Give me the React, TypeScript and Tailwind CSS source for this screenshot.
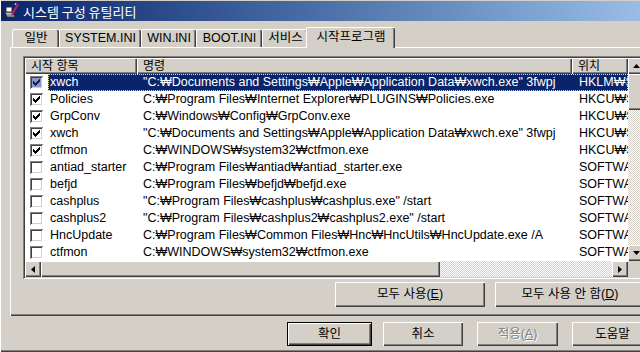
import React from 'react';

const RAISED =
  'shadow-[inset_1px_1px_#ffffff,inset_-1px_-1px_#404040,inset_-2px_-2px_#808080]';
const SUNKEN =
  'shadow-[inset_1px_1px_#808080,inset_-1px_-1px_#ffffff,inset_2px_2px_#404040,inset_-2px_-2px_#d4d0c8]';
const CHECKER =
  'bg-[repeating-conic-gradient(#ffffff_0_25%,#d4d0c8_0_50%)] bg-[length:2px_2px]';

type Row = { name: string; cmd: string; loc: string; checked: boolean; selected?: boolean };

const rows: Row[] = [
  { name: 'xwch', cmd: '"C:₩Documents and Settings₩Apple₩Application Data₩xwch.exe" 3fwpj', loc: 'HKLM₩SOFTWARE', checked: true, selected: true },
  { name: 'Policies', cmd: 'C:₩Program Files₩Internet Explorer₩PLUGINS₩Policies.exe', loc: 'HKCU₩SOFTWARE', checked: true },
  { name: 'GrpConv', cmd: 'C:₩Windows₩Config₩GrpConv.exe', loc: 'HKCU₩SOFTWARE', checked: true },
  { name: 'xwch', cmd: '"C:₩Documents and Settings₩Apple₩Application Data₩xwch.exe" 3fwpj', loc: 'HKCU₩SOFTWARE', checked: true },
  { name: 'ctfmon', cmd: 'C:₩WINDOWS₩system32₩ctfmon.exe', loc: 'HKCU₩SOFTWARE', checked: true },
  { name: 'antiad_starter', cmd: 'C:₩Program Files₩antiad₩antiad_starter.exe', loc: 'SOFTWARE', checked: false },
  { name: 'befjd', cmd: 'C:₩Program Files₩befjd₩befjd.exe', loc: 'SOFTWARE', checked: false },
  { name: 'cashplus', cmd: '"C:₩Program Files₩cashplus₩cashplus.exe" /start', loc: 'SOFTWARE', checked: false },
  { name: 'cashplus2', cmd: '"C:₩Program Files₩cashplus2₩cashplus2.exe" /start', loc: 'SOFTWARE', checked: false },
  { name: 'HncUpdate', cmd: 'C:₩Program Files₩Common Files₩Hnc₩HncUtils₩HncUpdate.exe /A', loc: 'SOFTWARE', checked: false },
  { name: 'ctfmon', cmd: 'C:₩WINDOWS₩system32₩ctfmon.exe', loc: 'SOFTWARE', checked: false },
];

function Check({ checked, selected }: { checked: boolean; selected?: boolean }) {
  return (
    <div
      className={`w-[13px] h-[13px] shrink-0 flex items-center justify-center ${SUNKEN} ${
        selected ? 'bg-[#8d96bd]' : 'bg-white'
      }`}
    >
      {checked && (
        <svg width="7" height="7" viewBox="0 0 7 7" shapeRendering="crispEdges">
          <path
            d="M6 0h1v3h-1v1h-1v1h-1v1h-1v1h-1v-1h-1v-1h-1v-3h1v1h1v1h1v-1h1v-1h1z"
            fill={selected ? '#0a246a' : '#000000'}
          />
        </svg>
      )}
    </div>
  );
}

function Arrow({ dir }: { dir: 'up' | 'down' | 'left' | 'right' }) {
  const pts: Record<string, string> = {
    up: '3.5,0 7,4 0,4',
    down: '0,0 7,0 3.5,4',
    left: '4,0 4,7 0,3.5',
    right: '0,0 4,3.5 0,7',
  };
  const horiz = dir === 'up' || dir === 'down';
  return (
    <div className={`w-[16px] h-[16px] shrink-0 bg-[#d4d0c8] flex items-center justify-center ${RAISED}`}>
      <svg width={horiz ? 7 : 4} height={horiz ? 4 : 7} viewBox={horiz ? '0 0 7 4' : '0 0 4 7'}>
        <polygon points={pts[dir]} fill="#000000" />
      </svg>
    </div>
  );
}

function TitleIcon() {
  return (
    <svg width="16" height="16" viewBox="0 0 16 16" className="shrink-0">
      <polygon points="1,9 8,9 11,14 3,14" fill="#c8c8c8" stroke="#303030" strokeWidth="1" />
      <rect x="2" y="4" width="6" height="5" fill="#ffffff" stroke="#303030" strokeWidth="1" />
      <line x1="3" y1="12" x2="9" y2="12" stroke="#606060" strokeWidth="1" />
      <line x1="8" y1="12" x2="14" y2="1" stroke="#c02060" strokeWidth="2" />
      <line x1="11" y1="2" x2="12" y2="0" stroke="#f0f0f0" strokeWidth="1" />
    </svg>
  );
}

type TabDef = { label: string; w: string; selected?: boolean };
const tabs: TabDef[] = [
  { label: '일반', w: 'w-[47px]' },
  { label: 'SYSTEM.INI', w: 'w-[82px]' },
  { label: 'WIN.INI', w: 'w-[55px]' },
  { label: 'BOOT.INI', w: 'w-[66px]' },
  { label: '서비스', w: 'w-[46px]' },
  { label: '시작프로그램', w: 'w-[89px]', selected: true },
];

export default function App() {
  return (
    <div className="w-[640px] h-[352px] overflow-hidden bg-[#d4d0c8] text-[12px] leading-none text-black font-['Liberation_Sans','Noto_Sans_CJK_KR',sans-serif]">
      <div className="w-[690px] h-[352px] flex flex-col pt-[1px] border-l border-white shadow-[inset_0_-1px_#404040,inset_0_-2px_#808080]">
        {/* Title bar */}
        <div className="h-[20px] flex items-center gap-[3px] pl-[3px] bg-linear-to-r from-[#0a246a] to-[#a6caf0] text-white text-[13px]">
          <TitleIcon />
          <span className="font-['Noto_Sans_CJK_KR',sans-serif]">시스템 구성 유틸리티</span>
        </div>

        {/* Body */}
        <div className="flex flex-col pl-[9px] pt-[6px]">
          {/* Tabs */}
          <div className="h-[20px] flex items-end pl-[2px] relative z-10 text-[12.5px]">
            {tabs.map((t) =>
              t.selected ? (
                <div
                  key={t.label}
                  className={`${t.w} h-[21px] -mb-[1px] -mx-[2px] bg-[#d4d0c8] border-t border-l border-white rounded-t-[2px] flex items-center justify-center shadow-[inset_-1px_0_#404040,inset_-2px_0_#808080]`}
                >
                  <span className="-mt-[2px]">{t.label}</span>
                </div>
              ) : (
                <div
                  key={t.label}
                  className={`${t.w} h-[18px] border-t border-l border-white rounded-t-[2px] flex items-center justify-center shadow-[inset_-1px_0_#404040,inset_-2px_0_#808080]`}
                >
                  {t.label}
                </div>
              )
            )}
          </div>

          {/* Tab panel */}
          <div className="w-[660px] h-[269px] flex flex-col border-t border-l border-white shadow-[inset_-1px_-1px_#404040,inset_-2px_-2px_#808080] pl-[12px] pt-[8px]">
            {/* List view */}
            <div className={`w-[623px] h-[223px] flex bg-white p-[2px] ${SUNKEN}`}>
              <div className="w-[603px] flex flex-col">
                {/* Header */}
                <div className="h-[16px] flex bg-[#d4d0c8]">
                  <div className={`w-[112px] h-[16px] flex items-center pl-[6px] ${RAISED}`}>시작 항목</div>
                  <div className={`w-[435px] h-[16px] flex items-center pl-[6px] ${RAISED}`}>명령</div>
                  <div className={`w-[56px] h-[16px] flex items-center pl-[6px] ${RAISED}`}>위치</div>
                </div>
                {/* Rows */}
                <div className="h-[187px] flex flex-col text-[12.5px] leading-[17px]">
                  {rows.map((r, i) => (
                    <div key={i} className="h-[17px] flex items-center">
                      <div className="pl-[5px] pr-[5px] flex items-center">
                        <Check checked={r.checked} selected={r.selected} />
                      </div>
                      <div
                        className={`flex-1 h-[17px] flex items-center whitespace-nowrap overflow-hidden ${
                          r.selected
                            ? 'bg-[#0a246a] text-white outline-1 outline-dotted outline-[#e8e0a0] -outline-offset-1'
                            : ''
                        }`}
                      >
                        <div className="w-[89px] h-[17px] shrink-0 pl-[2px] overflow-hidden">{r.name}</div>
                        <div className="w-[435px] h-[17px] shrink-0 pl-[6px] overflow-hidden">{r.cmd}</div>
                        <div className="w-[56px] h-[17px] shrink-0 pl-[7px] overflow-hidden">{r.loc}</div>
                      </div>
                    </div>
                  ))}
                </div>
                {/* Horizontal scrollbar */}
                <div className="h-[16px] flex">
                  <Arrow dir="left" />
                  <div className={`w-[399px] h-[16px] bg-[#d4d0c8] ${RAISED}`} />
                  <div className={`flex-1 h-[16px] ${CHECKER}`} />
                  <Arrow dir="right" />
                </div>
              </div>
              {/* Vertical scrollbar */}
              <div className="w-[16px] flex flex-col">
                <div className="h-[203px] flex flex-col">
                  <Arrow dir="up" />
                  <div className={`h-[36px] w-[16px] bg-[#d4d0c8] ${RAISED}`} />
                  <div className={`flex-1 w-[16px] ${CHECKER}`} />
                  <Arrow dir="down" />
                </div>
                <div className="h-[16px] bg-[#d4d0c8]" />
              </div>
            </div>

            {/* Enable/disable all */}
            <div className="mt-[3px] flex text-[12.5px]">
              <div className={`ml-[312px] w-[150px] h-[25px] flex items-center justify-center ${RAISED}`}>
                <span>
                  모두 사용(<span className="underline">E</span>)
                </span>
              </div>
              <div className={`ml-[10px] w-[150px] h-[25px] flex items-center justify-center ${RAISED}`}>
                <span>
                  모두 사용 안 함(<span className="underline">D</span>)
                </span>
              </div>
            </div>
          </div>

          {/* Dialog buttons */}
          <div className="mt-[6px] flex text-[12.5px]">
            <div className="ml-[277px] w-[85px] h-[24px] border border-black">
              <div className={`w-full h-full flex items-center justify-center ${RAISED}`}>확인</div>
            </div>
            <div className={`ml-[11px] w-[80px] h-[24px] flex items-center justify-center ${RAISED}`}>취소</div>
            <div
              className={`ml-[14px] w-[81px] h-[24px] flex items-center justify-center text-[#808080] [text-shadow:1px_1px_0_#ffffff] ${RAISED}`}
            >
              <span>
                적용(<span className="underline">A</span>)
              </span>
            </div>
            <div className={`ml-[14px] w-[81px] h-[24px] flex items-center justify-center ${RAISED}`}>도움말</div>
          </div>
        </div>
      </div>
    </div>
  );
}
